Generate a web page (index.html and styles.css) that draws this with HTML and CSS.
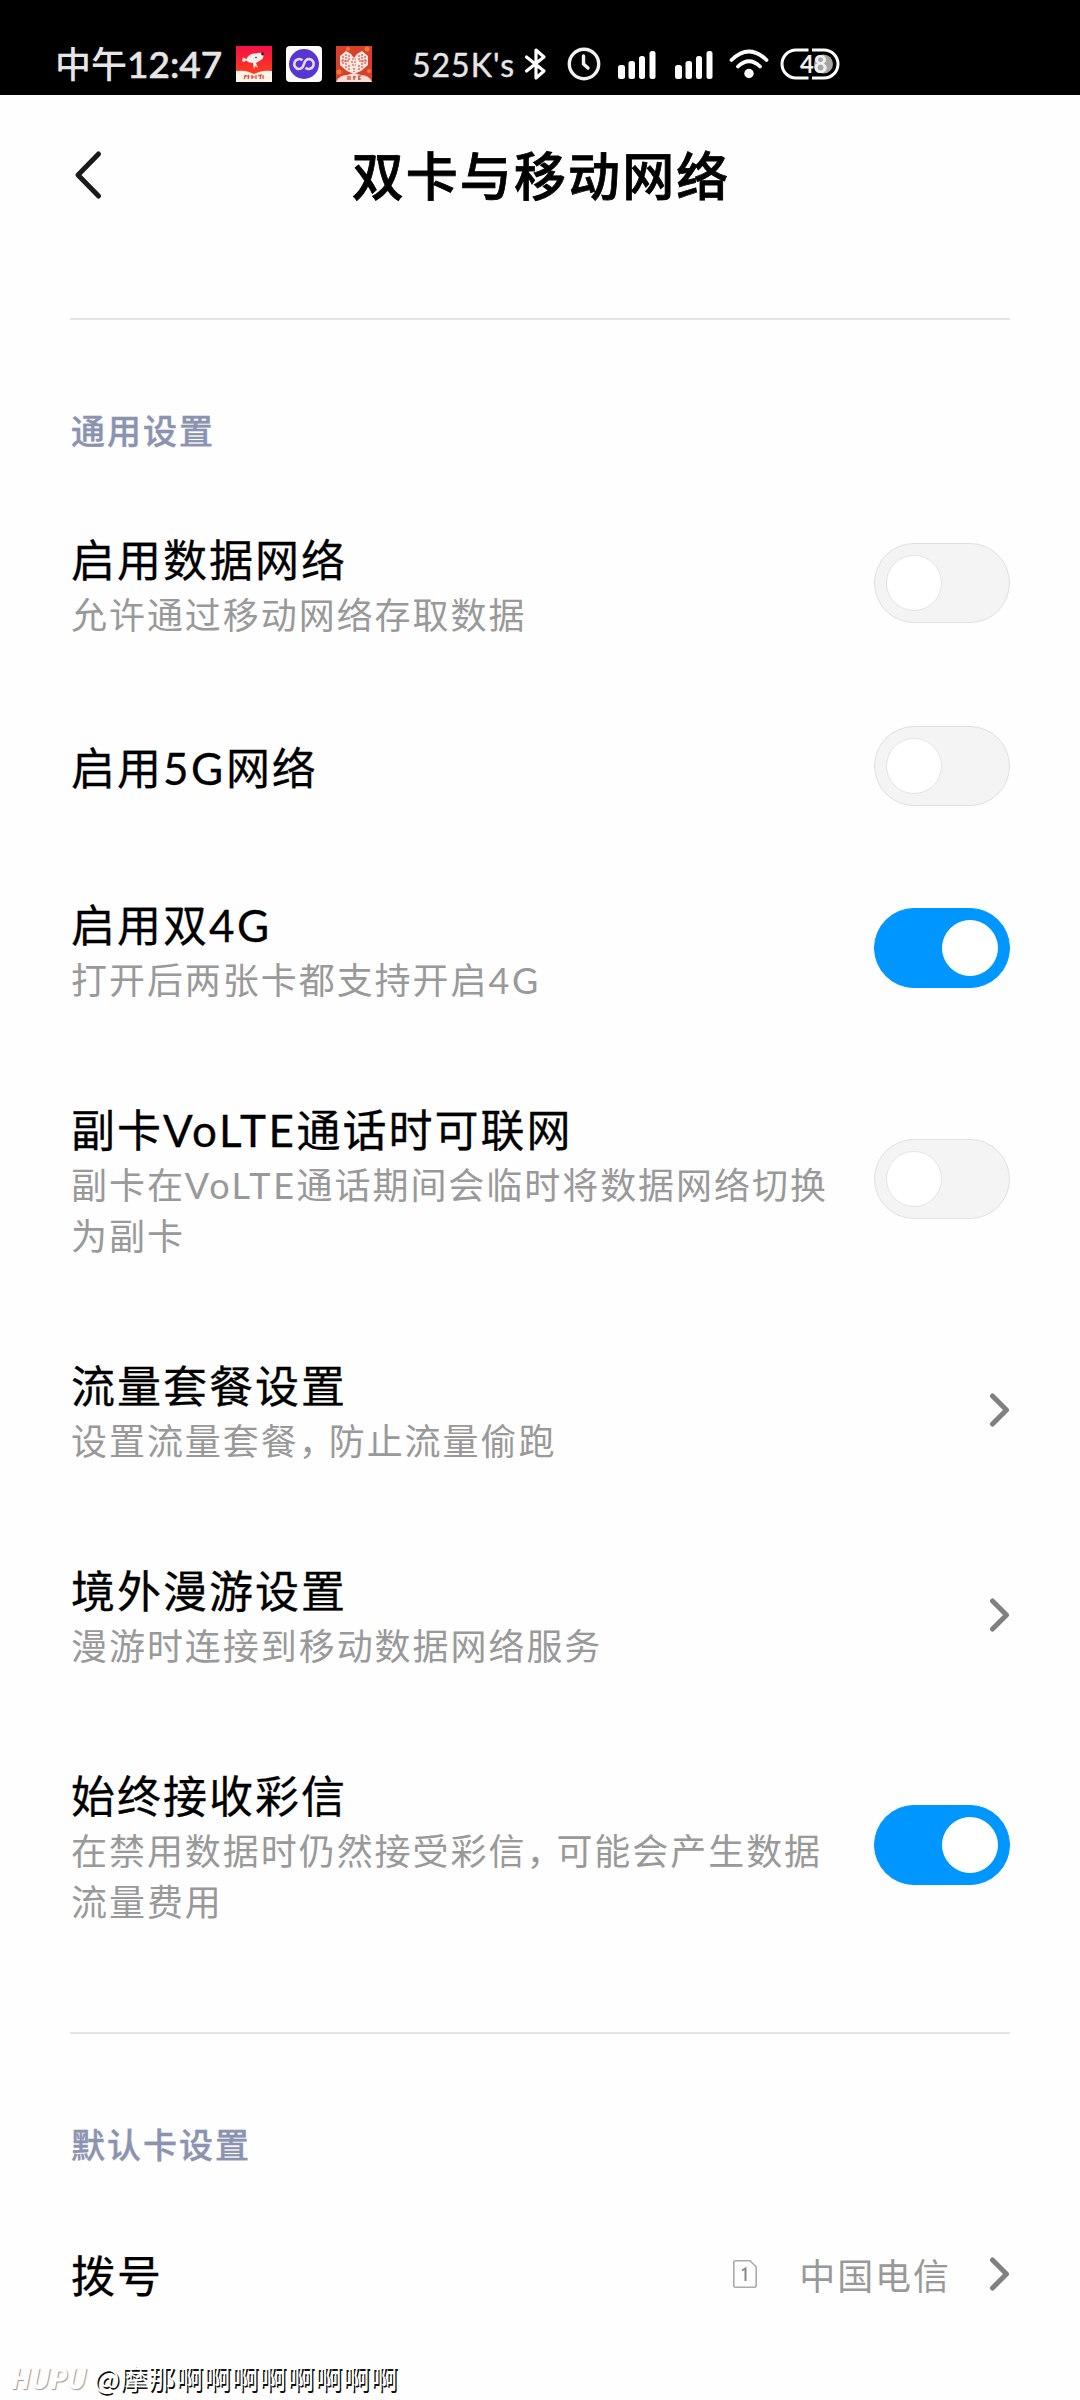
FILE: index.html
```html
<!DOCTYPE html>
<html lang="zh-CN">
<head>
<meta charset="utf-8">
<title>双卡与移动网络</title>
<link rel="stylesheet" href="styles.css">
</head>
<body>
<div class="screen">
  <div class="status">
    <div class="time">中午<span class="clock">12:47</span></div>
    <div class="apps">
      <svg width="36" height="36" viewBox="0 0 36 36">
        <defs><linearGradient id="jd" x1="0" y1="0" x2="0" y2="1"><stop offset="0" stop-color="#f5104a"/><stop offset="1" stop-color="#ff4a0a"/></linearGradient></defs>
        <rect width="36" height="36" fill="url(#jd)"/>
        <path d="M0 25Q8 24 13 26L18 28L23 26Q28 24 36 25V36H0Z" fill="#fff3ea"/>
        <path d="M6 15L7 11.500L10.500 13Q13 7 20 7.500Q25 6 27 8Q28.500 13 24 14.500Q21.500 16 20 17L22 22L19.500 20L18 23L17 17Q13 17 10 14.500L8 16Z" fill="#f4eeee"/>
        <circle cx="26.500" cy="8" r="1.400" fill="#222"/><circle cx="20" cy="11.500" r=".8" fill="#222"/>
        <path d="M8 33L10 29M8 30H12M13 29L12 33M16 29V33M15 31H19M20 29V33M22 30L25 29L24 33M27 29V33" stroke="#e33a2c" stroke-width="1.200" fill="none"/>
      </svg>
      <svg width="36" height="36" viewBox="0 0 36 36">
        <rect width="36" height="36" rx="4" fill="#fff"/>
        <circle cx="18" cy="18" r="15" fill="#5a35d2"/>
        <path d="M16.500 14.200A5 5 0 1 0 13 23Q16.500 23 18 18T23 13A5 5 0 1 1 19.500 21.800" fill="none" stroke="#e3dcff" stroke-width="2.600"/>
      </svg>
      <svg width="36" height="36" viewBox="0 0 36 36">
        <rect width="36" height="36" fill="#d8402c"/>
        <circle cx="12" cy="3" r="2" fill="#ef7a35"/><circle cx="31" cy="3" r="2.500" fill="#ef7a35"/><circle cx="3" cy="26" r="2.500" fill="#ef7a35"/><circle cx="33" cy="25" r="2" fill="#ef7a35"/>
        <path d="M4 10L10 5L15 8L18 12L21 8L26 5L32 10V19L25 25L18 28L11 25L4 19Z" fill="#ffe9e2"/>
        <path d="M10 8V22M7 10V19M13 9V14M13 19V25M26 8V22M29 10V19M23 9V14M23 19V25M5 15H13M23 15H31M16 13H20M15 16H21M16 19H20M18 22V26" stroke="#d8402c" stroke-width="1.100" stroke-dasharray="2 1" fill="none"/>
        <path d="M0 36Q3 29 11 29L18 27L25 29Q33 29 36 36Z" fill="#f9ddd2"/>
        <path d="M12 30V34M14 30V34M17 31H20M18 30V34M22 30H25M22 33H25M23 30V34" stroke="#c8402f" stroke-width="1.200" fill="none"/>
      </svg>
    </div>
    <div class="speed">525K's</div>
    <svg class="bt" width="24" height="34" viewBox="0 0 24 34"><path d="M2.500 10L20 24L12 31V3L20 10L2.500 24" fill="none" stroke="#fff" stroke-width="3.200" stroke-linejoin="round" stroke-linecap="round"/></svg>
    <svg class="alarm" width="34" height="34" viewBox="0 0 34 34"><circle cx="17" cy="17" r="14.700" fill="none" stroke="#f2f2f2" stroke-width="3.400"/><path d="M16.500 9V17L21 21" fill="none" stroke="#f2f2f2" stroke-width="3.400" stroke-linecap="round" stroke-linejoin="round"/></svg>
    <svg class="sig" width="38" height="28" viewBox="0 0 38 28" fill="#fff"><rect x="0" y="14" width="7" height="14" rx="2.500"/><rect x="10.500" y="10" width="6.500" height="18" rx="2.500"/><rect x="21" y="5" width="6" height="23" rx="2.500"/><rect x="31.500" y="0" width="6" height="28" rx="2.500"/></svg>
    <svg class="sig2" width="38" height="28" viewBox="0 0 38 28" fill="#fff"><rect x="0" y="14" width="7" height="14" rx="2.500"/><rect x="10.500" y="10" width="6.500" height="18" rx="2.500"/><rect x="21" y="5" width="6" height="23" rx="2.500"/><rect x="31.500" y="0" width="6" height="28" rx="2.500"/></svg>
    <svg class="wifi" width="40" height="32" viewBox="0 0 40 32"><path d="M2.500 12Q20 -5 37.500 12M9 18.500Q20 8 31 18.500" fill="none" stroke="#fff" stroke-width="3.800" stroke-linecap="round"/><circle cx="20" cy="25.500" r="4.700" fill="#fff"/></svg>
    <div class="battery">
      <svg width="60" height="32" viewBox="0 0 60 32"><circle cx="43.500" cy="16" r="9.500" fill="#a5a5a5"/><path d="M28.500 2H16A14 14 0 0 0 16 30H28.500M32 2H44A14 14 0 0 1 44 30H32" fill="none" stroke="#fff" stroke-width="3"/></svg>
      <span class="level">48</span>
    </div>
  </div>

  <div class="header">
    <svg class="back" width="30" height="50" viewBox="0 0 30 50"><path d="M25.500 4L5 25L25.500 46" fill="none" stroke="#1a1a1a" stroke-width="5" stroke-linecap="round" stroke-linejoin="round"/></svg>
    <h1>双卡与移动网络</h1>
  </div>

  <div class="section">
    <h2>通用设置</h2>
    <div class="row first">
      <div class="text"><div class="name">启用数据网络</div><div class="desc">允许通过移动网络存取数据</div></div>
      <div class="switch"><i></i></div>
    </div>
    <div class="row single">
      <div class="text"><div class="name">启用<span class="la">5G</span>网络</div></div>
      <div class="switch"><i></i></div>
    </div>
    <div class="row dual">
      <div class="text"><div class="name">启用双<span class="la">4G</span></div><div class="desc">打开后两张卡都支持开启<span class="la">4G</span></div></div>
      <div class="switch on"><i></i></div>
    </div>
    <div class="row tall volte">
      <div class="text"><div class="name">副卡<span class="la">VoLTE</span>通话时可联网</div><div class="desc">副卡在<span class="la">VoLTE</span>通话期间会临时将数据网络切换<br>为副卡</div></div>
      <div class="switch"><i></i></div>
    </div>
    <div class="row">
      <div class="text"><div class="name">流量套餐设置</div><div class="desc">设置流量套餐<span class="comma">，</span>防止流量偷跑</div></div>
      <svg class="chev" width="22" height="36" viewBox="0 0 22 36"><path d="M4.500 4L18.500 18L4.500 32" fill="none" stroke="#808080" stroke-width="5" stroke-linecap="round" stroke-linejoin="round"/></svg>
    </div>
    <div class="row">
      <div class="text"><div class="name">境外漫游设置</div><div class="desc">漫游时连接到移动数据网络服务</div></div>
      <svg class="chev" width="22" height="36" viewBox="0 0 22 36"><path d="M4.500 4L18.500 18L4.500 32" fill="none" stroke="#808080" stroke-width="5" stroke-linecap="round" stroke-linejoin="round"/></svg>
    </div>
    <div class="row tall">
      <div class="text"><div class="name">始终接收彩信</div><div class="desc">在禁用数据时仍然接受彩信<span class="comma">，</span>可能会产生数据<br>流量费用</div></div>
      <div class="switch on"><i></i></div>
    </div>
  </div>

  <div class="section second">
    <h2>默认卡设置</h2>
    <div class="row single">
      <div class="text"><div class="name">拨号</div></div>
      <div class="value">
        <svg width="24" height="28" viewBox="0 0 24 28"><path d="M2.500 .8H17L23.200 7V25.500Q23.200 27.200 21.500 27.200H2.500Q.8 27.200 .8 25.500V2.500Q.8 .8 2.500 .8Z" fill="none" stroke="#aaa" stroke-width="1.600"/><path d="M9 10.500L12.500 8.500V21" fill="none" stroke="#888" stroke-width="2"/></svg>
        <span class="desc">中国电信</span>
        <svg class="chev" width="22" height="36" viewBox="0 0 22 36"><path d="M4.500 4L18.500 18L4.500 32" fill="none" stroke="#808080" stroke-width="5" stroke-linecap="round" stroke-linejoin="round"/></svg>
      </div>
    </div>
  </div>

  <div class="mark"><span class="brand">HUPU</span><span class="user">@摩那啊啊啊啊啊啊啊啊</span></div>
</div>
</body>
</html>
```

FILE: styles.css
```css
* { box-sizing: border-box; }
body {
  margin: 0;
  background: #fefefe;
  font-family: "Noto Sans CJK SC", sans-serif;
  color: #000;
}
svg { display: block; flex: none; }
.screen { position: relative; width: 1080px; height: 2400px; overflow: hidden; }

.status {
  display: flex;
  align-items: flex-start;
  height: 95px;
  padding-left: 55px;
  background: #000;
  color: #e6e6e6;
  white-space: nowrap;
}
.time { width: 181px; margin-top: 38px; font-size: 36px; line-height: 48px; font-weight: 500; }
.clock { font-family: Lato, sans-serif; font-size: 37px; font-weight: 500; line-height: 1; -webkit-text-stroke: 0.6px #e6e6e6; }
.apps { display: flex; gap: 14px; margin-top: 46px; width: 176px; }
.speed { width: 112px; margin-top: 41px; font: 32px/48px Lato, sans-serif; letter-spacing: 1px; -webkit-text-stroke: 0.4px #e6e6e6; }
.bt { margin-top: 47px; }
.alarm { margin: 47px 0 0 19px; }
.sig { margin: 51px 0 0 17px; }
.sig2 { margin: 51px 0 0 19px; }
.wifi { margin: 48px 0 0 16px; }
.battery { position: relative; width: 60px; margin: 48px 0 0 11px; }
.level {
  position: absolute;
  left: 20px;
  top: 0;
  font: bold 24px/32px Lato, sans-serif;
  letter-spacing: -0.5px;
  color: #f0f0f0;
}

.header {
  display: grid;
  grid-template-columns: 130px 1fr 130px;
  align-items: center;
  height: 223px;
  padding-bottom: 63px;
}
.back { margin-left: 73px; }
h1 {
  margin: 0 0 2px;
  padding-left: 2px;
  font-size: 52px;
  line-height: 60px;
  font-weight: 500;
  letter-spacing: 2.1px;
  text-align: center;
  -webkit-text-stroke: 0.8px #000;
}

.section { margin: 0 70px; border-top: 2px solid #e4e4e4; }
.second { margin-top: 59px; }
h2 {
  height: 160px;
  margin: 0;
  padding: 85px 0 0 1px;
  font-size: 34px;
  line-height: 50px;
  font-weight: 500;
  letter-spacing: 2px;
  color: #8c93b0;
  -webkit-text-stroke: 0.4px #8c93b0;
}
.row { display: flex; align-items: center; justify-content: space-between; height: 205px; }
.row.first { height: 206px; }
.row.single { height: 160px; }
.row.dual { height: 204px; }
.row.tall { height: 256px; }
.row.volte { height: 257px; }
.text { padding-left: 1px; white-space: nowrap; }
.name { font-size: 44px; line-height: 60px; letter-spacing: 2px; -webkit-text-stroke: 0.3px #000; }
.desc { font-size: 36px; line-height: 51px; letter-spacing: 1.950px; color: #999; }
.la { font-family: Lato, sans-serif; line-height: 1; letter-spacing: 2.6px; }
.comma { letter-spacing: -6px; }

.switch {
  flex: none;
  width: 136px;
  height: 80px;
  padding: 11px;
  border: 1px solid #e0e0e0;
  border-radius: 40px;
  background: #f4f4f4;
}
.switch i { display: block; width: 56px; height: 56px; border: 1px solid #e4e4e4; border-radius: 50%; background: #fff; }
.switch.on { border-color: #0096ff; background: #0096ff; }
.switch.on i { margin-left: auto; border-color: #fff; }

.value { display: flex; align-items: center; }
.value .desc { margin: 0 37px 0 42px; }

.mark {
  position: absolute;
  left: 11px;
  top: 2358px;
  display: flex;
  align-items: center;
  line-height: 40px;
  color: #fff;
  white-space: nowrap;
}
.brand {
  width: 83px;
  font: italic bold 28px/40px "Open Sans", sans-serif;
  text-shadow: 1px 1px 1px #999;
}
.user { font-size: 27px; letter-spacing: 0.8px; text-shadow: 1.5px 1.5px 0.5px #111; }
```
